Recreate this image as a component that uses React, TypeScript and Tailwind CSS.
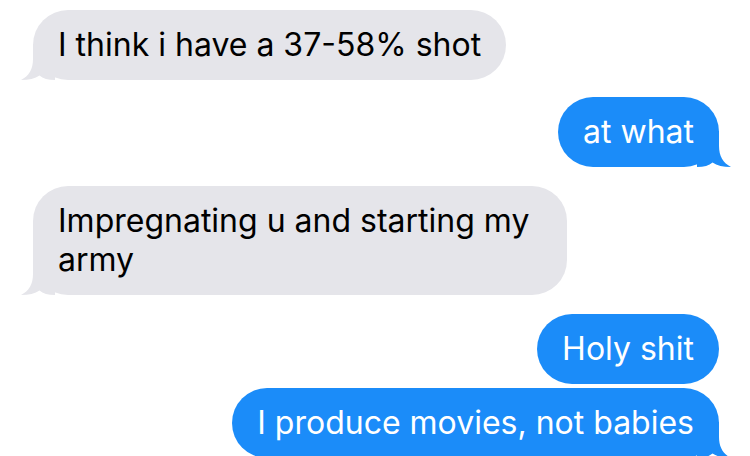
import React from "react";

type Msg = { text: string; me: boolean; gap: string; tail: boolean };

const messages: Msg[] = [
  { text: "I think i have a 37-58% shot", me: false, gap: "mt-[10px]", tail: true },
  { text: "at what", me: true, gap: "mt-[17px]", tail: true },
  { text: "Impregnating u and starting my army", me: false, gap: "mt-[19px]", tail: true },
  { text: "Holy shit", me: true, gap: "mt-[19px]", tail: false },
  { text: "I produce movies, not babies", me: true, gap: "mt-[4px]", tail: true },
];

const Tail = ({ me }: { me: boolean }) => (
  <svg
    width="34"
    height="36"
    viewBox="0 0 34 36"
    className={
      me
        ? "absolute -right-[12px] bottom-0 -scale-x-100"
        : "absolute -left-[12px] bottom-0"
    }
  >
    <path
      d="M12 0 L12 15 C12 25 8 32 0 36 C8 36 14 34.5 18.5 31.5 C22 34.5 27 36 34 36 L34 0 Z"
      fill={me ? "#1b8cf9" : "#e5e5ea"}
    />
  </svg>
);

const Bubble = ({ msg }: { msg: Msg }) => (
  <div className={`flex ${msg.me ? "justify-end" : "justify-start"} ${msg.gap}`}>
    <div
      className={`relative max-w-[534px] rounded-[35px] px-[25px] pt-[15px] pb-[16px] text-[32px] leading-[39px] ${
        msg.me ? "bg-[#1b8cf9] text-white" : "bg-[#e5e5ea] text-black"
      }`}
    >
      {msg.tail && <Tail me={msg.me} />}
      <span className="relative">{msg.text}</span>
    </div>
  </div>
);

export default function App() {
  return (
    <div
      className="w-[750px] h-[456px] overflow-hidden bg-white pl-[33px] pr-[31px]"
      style={{ fontFamily: "Inter, 'Liberation Sans', sans-serif" }}
    >
      {messages.map((m, i) => (
        <Bubble key={i} msg={m} />
      ))}
    </div>
  );
}
